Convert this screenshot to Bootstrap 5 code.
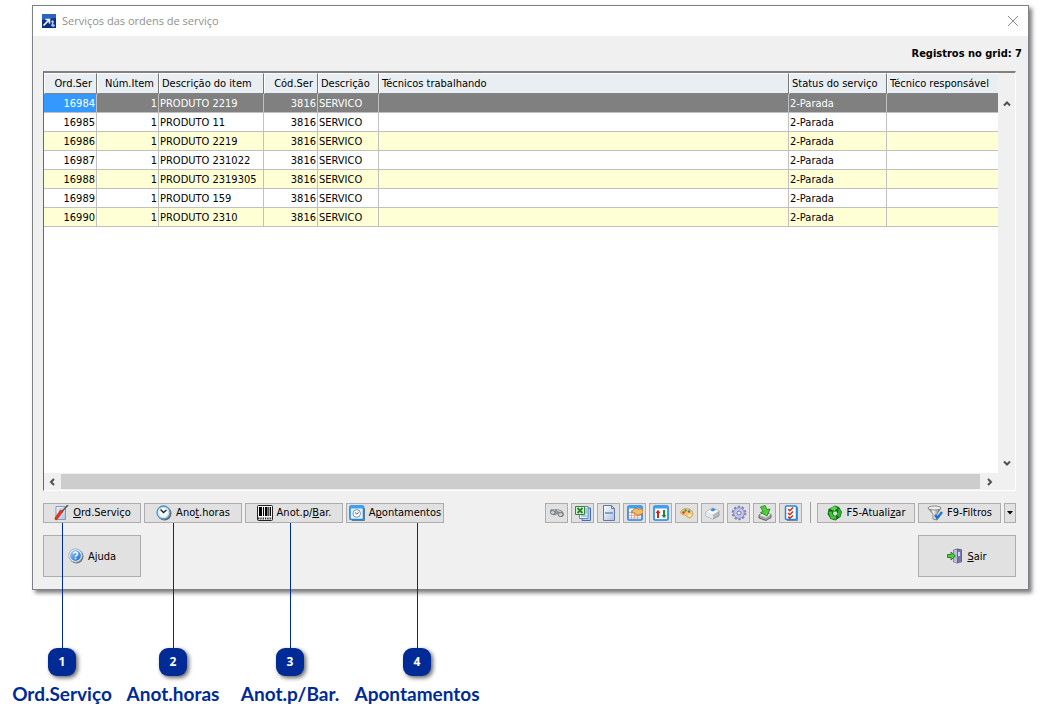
<!DOCTYPE html>
<html lang="pt-BR">
<head>
<meta charset="utf-8">
<meta name="viewport" content="width=device-width, initial-scale=1">
<title>Serviços das ordens de serviço</title>
<link href="https://cdn.jsdelivr.net/npm/bootstrap@5.3.0/dist/css/bootstrap.min.css" rel="stylesheet">
<style>
  :root { --ui: "DejaVu Sans Condensed", "Noto Sans", sans-serif; --navy: #002b96; }
  body { font: 11px/14px var(--ui); color: #000; background: #fff; padding: 5px 23px 133px 32px; }
  .win { min-height: calc(100vh - 138px); background: #f0f0f0; border: 1px solid #7d8186; box-shadow: 3px 3px 4px rgba(0,0,0,.5); }
  .titlebar { height: 30px; padding: 0 9px; background: #fff; font: 11px/16px "Open Sans", sans-serif; color: #8f8f8f; gap: 6px; }
  .titlebar svg { flex: none; }
  .closer { border: 0; background: none; padding: 0; line-height: 0; }
  .content-area { padding: 0 12px 12px 10px; }
  .counter { font-weight: 700; line-height: 16px; padding: 10px 6px 9px; margin: 0; }
  .sheet { background: #fff; border: 1px solid #fff; border-top: 2px solid #808080; border-left: 1px solid #696969; }
  .sheet-pane { min-width: 0; }
  .sheet table { table-layout: fixed; width: 100%; border-collapse: separate; border-spacing: 0; }
  .sheet th { height: 21px; padding: 0 2px; font-weight: 400; background: #e9eef2; border: solid #fff; border-width: 1px 0 1px 1px; border-right: 1px solid #777; border-bottom: 1px solid #808488; white-space: nowrap; }
  .sheet td { height: 19px; padding: 2px 1px 0; border-right: 1px solid #c0c0c0; border-bottom: 1px solid #c0c0c0; white-space: nowrap; }
  .sheet th:last-child, .sheet td:last-child { border-right: 0; }
  .sheet tbody tr:nth-child(odd) td { background: #ffffd5; }
  .sheet tbody tr.current td { background: #808080; color: #fff; }
  .sheet tbody tr.current td:first-child { background: #3399ff; }
  .sheet .num { text-align: right; }
  .sheet th.num { padding-right: 4px; }
  .w-ord { width: 53px; } .w-num { width: 62px; } .w-item { width: 105px; } .w-cod { width: 54px; }
  .w-desc { width: 61px; } .w-status { width: 98px; } .w-resp { width: 111px; }
  .vbar { flex: none; width: 17px; background: #f0f0f0; padding: 27px 0 6px; }
  .hbar { height: 17px; background: #f0f0f0; padding: 0 22px 0 4px; gap: 5px; }
  .hbar span { height: 15px; background: #cdcdcd; }
  .arrow { border: 0; padding: 0; background: none; line-height: 0; width: 8px; }
  .tools { margin-top: 11px; gap: 3px; }
  .tool { height: 20px; width: 98px; padding: 0; gap: 4px; border: 1px solid #adadad; background: #e1e1e1; color: #000; font: inherit; white-space: nowrap; }
  .tool svg { flex: none; }
  .tool span { padding-top: 1px; }
  .tool.sq { width: 23px; } .tool.mid { width: 83px; } .tool.drop { width: 12px; }
  .tool.tall { height: 42px; }
  .split { width: 1px; height: 21px; background: #a0a0a0; margin: 0 3px 0 5px; }
  .bottom { margin-top: 12px; }
  .callout { position: absolute; top: 20px; width: 0; color: var(--navy); z-index: 2; pointer-events: none; }
  .callout i { width: 1px; height: 125px; background: var(--navy); flex: none; }
  .callout b { width: 28px; height: 28px; border-radius: 9px; background: var(--navy); color: #fff; font: 700 12px/28px "Open Sans", sans-serif; text-align: center; box-shadow: 2px 2px 4px rgba(0,0,0,.6); flex: none; }
  .callout span { font: 700 19px/24px Lato, sans-serif; margin-top: 6px; white-space: nowrap; }
  .at-1 { left: 19px; } .at-2 { left: 29px; } .at-3 { left: 45px; } .at-4 { left: 71px; }
</style>
</head>
<body>
<svg width="0" height="0" class="position-absolute" aria-hidden="true">
  <defs>
    <linearGradient id="gb" x1="0" y1="0" x2="1" y2="1"><stop offset="0" stop-color="#9ed0ff"/><stop offset="1" stop-color="#1769c8"/></linearGradient>
    <linearGradient id="gp" x1="0" y1="0" x2="1" y2="1"><stop offset="0" stop-color="#fff"/><stop offset="1" stop-color="#a9bfe4"/></linearGradient>
    <linearGradient id="gm" x1="0" y1="0" x2="1" y2="0"><stop offset="0" stop-color="#555"/><stop offset=".4" stop-color="#f4f4f4"/><stop offset="1" stop-color="#666"/></linearGradient>
  </defs>
</svg>
<main class="win d-flex flex-column">
  <header class="titlebar d-flex align-items-center">
    <svg width="14" height="14" viewBox="0 0 14 14"><rect width="14" height="14" fill="#0c2f86"/><path d="M0 0h14v4L0 6z" fill="#2b63bd"/><path d="M1.500 11.500 6.500 6.500M3.500 5.500h4v4" stroke="#fff" stroke-width="1.600" fill="none"/><path d="M9 12l1-3-1-2 2-1 1 2-1 2 2 1-1 2z" fill="#a8c8f4"/></svg>
    <span>Serviços das ordens de serviço</span>
    <button class="closer ms-auto" type="button" aria-label="Fechar"><svg width="12" height="12" viewBox="0 0 12 12"><path d="M1 1l10 10M11 1L1 11" stroke="#8c8c8c"/></svg></button>
  </header>
  <p class="counter text-end">Registros no grid: 7</p>
  <div class="content-area d-flex flex-column flex-grow-1">
    <section class="sheet d-flex flex-column flex-grow-1">
      <div class="d-flex flex-grow-1">
        <div class="sheet-pane flex-grow-1">
          <table>
            <colgroup><col class="w-ord"><col class="w-num"><col class="w-item"><col class="w-cod"><col class="w-desc"><col><col class="w-status"><col class="w-resp"></colgroup>
            <thead><tr><th class="num">Ord.Ser</th><th class="num">Núm.Item</th><th>Descrição do item</th><th class="num">Cód.Ser</th><th>Descrição</th><th>Técnicos trabalhando</th><th>Status do serviço</th><th>Técnico responsável</th></tr></thead>
            <tbody>
              <tr class="current"><td class="num">16984</td><td class="num">1</td><td>PRODUTO 2219</td><td class="num">3816</td><td>SERVICO</td><td></td><td>2-Parada</td><td></td></tr>
              <tr><td class="num">16985</td><td class="num">1</td><td>PRODUTO 11</td><td class="num">3816</td><td>SERVICO</td><td></td><td>2-Parada</td><td></td></tr>
              <tr><td class="num">16986</td><td class="num">1</td><td>PRODUTO 2219</td><td class="num">3816</td><td>SERVICO</td><td></td><td>2-Parada</td><td></td></tr>
              <tr><td class="num">16987</td><td class="num">1</td><td>PRODUTO 231022</td><td class="num">3816</td><td>SERVICO</td><td></td><td>2-Parada</td><td></td></tr>
              <tr><td class="num">16988</td><td class="num">1</td><td>PRODUTO 2319305</td><td class="num">3816</td><td>SERVICO</td><td></td><td>2-Parada</td><td></td></tr>
              <tr><td class="num">16989</td><td class="num">1</td><td>PRODUTO 159</td><td class="num">3816</td><td>SERVICO</td><td></td><td>2-Parada</td><td></td></tr>
              <tr><td class="num">16990</td><td class="num">1</td><td>PRODUTO 2310</td><td class="num">3816</td><td>SERVICO</td><td></td><td>2-Parada</td><td></td></tr>
            </tbody>
          </table>
        </div>
        <div class="vbar d-flex flex-column align-items-center justify-content-between">
          <button class="arrow" type="button" aria-label="Subir"><svg width="8" height="7" viewBox="0 0 8 7"><path d="M1 5.500 4 2.500l3 3" stroke="#505050" stroke-width="2" fill="none"/></svg></button>
          <button class="arrow" type="button" aria-label="Descer"><svg width="8" height="7" viewBox="0 0 8 7"><path d="M1 1.500 4 4.500l3-3" stroke="#505050" stroke-width="2" fill="none"/></svg></button>
        </div>
      </div>
      <div class="hbar d-flex align-items-center">
        <button class="arrow" type="button" aria-label="Esquerda"><svg width="7" height="8" viewBox="0 0 7 8"><path d="M5 1 2 4l3 3" stroke="#505050" stroke-width="2" fill="none"/></svg></button>
        <span class="flex-grow-1"></span>
        <button class="arrow" type="button" aria-label="Direita"><svg width="7" height="8" viewBox="0 0 7 8"><path d="M2 1l3 3-3 3" stroke="#505050" stroke-width="2" fill="none"/></svg></button>
      </div>
    </section>

    <div class="tools d-flex align-items-center">
      <div class="position-relative">
        <button class="tool d-flex align-items-center justify-content-center" type="button">
          <svg width="16" height="16" viewBox="0 0 16 16"><path d="M3 1.500h9.500v13H3z" fill="url(#gp)" stroke="#8799bb"/><path d="M5 4h5M5 6h4" stroke="#b6c4de"/><path d="M15 0 8.500 7" stroke="#555" stroke-width="1.500"/><path d="M10 6.500 4 14.500c-1 1-2.500 0-2-1.500L7.500 5z" fill="#e8361b" stroke="#b51c0a" stroke-width=".6"/></svg>
          <span><u>O</u>rd.Serviço</span></button>
        <div class="callout at-1 d-flex flex-column align-items-center"><i></i><b>1</b><span>Ord.Serviço</span></div>
      </div>
      <div class="position-relative">
        <button class="tool d-flex align-items-center justify-content-center" type="button">
          <svg width="16" height="16" viewBox="0 0 16 16"><circle cx="8.500" cy="8.500" r="7" fill="#666"/><circle cx="7.500" cy="7.500" r="6.500" fill="#bfe6fa" stroke="#5e93bd" stroke-width="1.300"/><circle cx="7.500" cy="7.500" r="4.500" fill="#f4fcff"/><path d="M4.500 4.500l3 3 3-2.500" stroke="#222" stroke-width="1.300" fill="none"/></svg>
          <span>Ano<u>t</u>.horas</span></button>
        <div class="callout at-2 d-flex flex-column align-items-center"><i></i><b>2</b><span>Anot.horas</span></div>
      </div>
      <div class="position-relative">
        <button class="tool d-flex align-items-center justify-content-center" type="button">
          <svg width="16" height="16" viewBox="0 0 16 16"><rect x=".5" y=".5" width="15" height="15" rx="1" fill="#f4f4f4" stroke="#222"/><path d="M2 2h3v9H2zM6 2h1v9H6zM8 2h2.500v9H8zM11.300 2h.7v9h-.7zM12.700 2H14v9h-1.300z" fill="#000"/><path d="M1 13.500h14" stroke="#333" stroke-width="2" stroke-dasharray="1.400 .9"/></svg>
          <span>Anot.p/<u>B</u>ar.</span></button>
        <div class="callout at-3 d-flex flex-column align-items-center"><i></i><b>3</b><span>Anot.p/Bar.</span></div>
      </div>
      <div class="position-relative">
        <button class="tool d-flex align-items-center justify-content-center" type="button">
          <svg width="16" height="16" viewBox="0 0 16 16"><path d="M3 15.500h12.500V3" stroke="#777" fill="none"/><rect x="1" y="1" width="13.500" height="13.500" rx="1" fill="#eaf6ff" stroke="#1c86e8" stroke-width="1.600"/><path d="M1 1h13.500v2.500H1z" fill="#3ea0f5"/><circle cx="7.700" cy="8.500" r="3.800" fill="#fff" stroke="#6e8fa8"/><path d="M6 7.500l1.700 1.500 2-1.500" stroke="#456" fill="none"/></svg>
          <span>A<u>p</u>ontamentos</span></button>
        <div class="callout at-4 d-flex flex-column align-items-center"><i></i><b>4</b><span>Apontamentos</span></div>
      </div>

      <div class="tools d-flex align-items-center ms-auto mt-0">
        <button class="tool sq d-flex align-items-center justify-content-center" type="button" aria-label="Localizar"><svg width="16" height="16" viewBox="0 0 16 16"><path d="M1 6c0-2 3-2.500 4-1.500L7 4c2 0 3 0 4 1 2 0 4 2.500 4 4.500s-2 3-4 2L8 9c-1 1-2 2-4 1S1 8 1 6z" fill="#8f959a"/><path d="M3 5l3 1M8 5l4 2" stroke="#d5d9dc"/><ellipse cx="3.800" cy="7.500" rx="2.300" ry="2" fill="#c3d3da" stroke="#666" stroke-width=".8"/><ellipse cx="11.500" cy="9.500" rx="2.500" ry="2" fill="#c3d3da" stroke="#666" stroke-width=".8"/></svg></button>
        <button class="tool sq d-flex align-items-center justify-content-center" type="button" aria-label="Excel"><svg width="16" height="16" viewBox="0 0 16 16"><path d="M8 3h7.500v12.500H7z" fill="#b9d2f3" stroke="#3f6bb2"/><path d="M4.500 1.500h8.500v12H4.500z" fill="#f7fbff" stroke="#5d82b8"/><path d="M10 4h2M10 6h2M10 8h2M6 11h6" stroke="#5d90cf"/><path d="M.5 1.500h9v8h-9z" fill="#d4efcc" stroke="#31873a"/><path d="M2.500 3l5 5M7.500 3l-5 5" stroke="#238332" stroke-width="1.800"/></svg></button>
        <button class="tool sq d-flex align-items-center justify-content-center" type="button" aria-label="Documento"><svg width="16" height="16" viewBox="0 0 16 16"><path d="M2.500.5h8l3 3v12h-11z" fill="url(#gp)" stroke="#6078a5"/><path d="M10.500.5v3h3z" fill="#fff" stroke="#6078a5"/><path d="M4 7h8v2H4z" fill="#8a9fc4"/></svg></button>
        <button class="tool sq d-flex align-items-center justify-content-center" type="button" aria-label="Calendário"><svg width="16" height="16" viewBox="0 0 16 16"><rect x="1" y="1" width="14" height="14" rx="1" fill="#fff" stroke="#1c86e8" stroke-width="1.600"/><path d="M1 1h14v2.500H1z" fill="#3ea0f5"/><path d="M2 7.500h12M2 10.500h12M2 13h12M4.500 5v9M7.500 5v9M10.500 5v9" stroke="#f2a392"/><path d="M5 6c2-3 4-3 6-2h5v4.500l-4 1.500c-2 0-4 0-4-2H5z" fill="#f0bd68" stroke="#a86a20" stroke-width=".8"/></svg></button>
        <button class="tool sq d-flex align-items-center justify-content-center" type="button" aria-label="Ordenar"><svg width="16" height="16" viewBox="0 0 16 16"><rect x="1" y="1" width="14" height="14" rx="1" fill="#fff" stroke="#1c86e8" stroke-width="1.600"/><path d="M1 1h14v2.500H1z" fill="#3ea0f5"/><path d="M2.500 8 5 4.800 7.500 8H6v5H4V8z" fill="#e01818"/><path d="M8.500 10 11 13.300 13.500 10H12V5h-2v5z" fill="#158a36"/></svg></button>
        <button class="tool sq d-flex align-items-center justify-content-center" type="button" aria-label="Cores"><svg width="16" height="16" viewBox="0 0 16 16"><path d="M2 6c2-3 8-3 10-1 3 2 2 7-1 8-3 0-3-2-5-3-3 0-5-1-4-4z" fill="#f3cb72" stroke="#cf9c4c" stroke-width=".8"/><circle cx="4.500" cy="7.500" r="1.300" fill="#d23b2c"/><circle cx="6.500" cy="5.500" r="1.200" fill="#3aa544"/><circle cx="10" cy="6.500" r="1.300" fill="#3b77d1"/><circle cx="10.500" cy="10.500" r="1.200" fill="#fff4c2"/></svg></button>
        <button class="tool sq d-flex align-items-center justify-content-center" type="button" aria-label="Imprimir"><svg width="16" height="16" viewBox="0 0 16 16"><path d="M1 7l6-4 7 3v5l-6 3-7-3z" fill="#b4b9be" stroke="#8d9299" stroke-width=".8"/><path d="M1 7l6-4 7 3-6 3.500z" fill="#f5f7f9"/><path d="M8 9.500V14l-7-3V7z" fill="#e6e9ec"/><path d="M5 5l3-2 3 1.500-3 2z" fill="#3c8ad9"/></svg></button>
        <button class="tool sq d-flex align-items-center justify-content-center" type="button" aria-label="Configurar"><svg width="16" height="16" viewBox="0 0 16 16"><circle cx="8" cy="8" r="6" fill="none" stroke="#7d80b8" stroke-width="2.600" stroke-dasharray="2.200 1.570"/><circle cx="8" cy="8" r="5.300" fill="#c5c8ec" stroke="#8f92c6"/><circle cx="8" cy="8" r="2" fill="#efeff8" stroke="#7275ad"/></svg></button>
        <button class="tool sq d-flex align-items-center justify-content-center" type="button" aria-label="Salvar"><svg width="16" height="16" viewBox="0 0 16 16"><path d="M2 10l5-2.500 7 2v3l-5 3-7-2.500z" fill="#a4a8ab" stroke="#444" stroke-width=".8"/><path d="M2 10l7 2.500 5-3L7.500 8z" fill="#e6e8ea"/><path d="M3.500 2 8 .5 10 4.500 13 4l-3 7-6.500-3.500 2.500-1z" fill="#4fd03b" stroke="#1f7d1c" stroke-width=".8"/></svg></button>
        <button class="tool sq d-flex align-items-center justify-content-center" type="button" aria-label="Seleção"><svg width="16" height="16" viewBox="0 0 16 16"><path d="M4 15.500h10.500V2" stroke="#888" fill="none"/><rect x="2.500" y="1" width="11" height="13.500" rx="1" fill="#fff" stroke="#2586da" stroke-width="1.500"/><path d="M5 4l1.800 1.700L10 2.500M5 8l1.800 1.700L10 6.500M5 11.800l1.800 1.500L10 10.500" stroke="#d92218" stroke-width="1.400" fill="none"/></svg></button>
        <div class="split"></div>
        <button class="tool d-flex align-items-center justify-content-center" type="button">
          <svg width="16" height="16" viewBox="0 0 16 16"><path d="M8 .5l4 1.500 3 5-1.500 5-5 3.500-5-1.500L.5 9l1-5z" fill="#176f1b"/><path d="M3 3.500 7.500 1l3 2-3 3L5 5z" fill="#58d34a"/><path d="M11.500 3l3 4-1.500 5-3-1 1-4z" fill="#2fae33"/><path d="M1.500 7l3-.5 1.500 4 3 1v3L4 13.500z" fill="#41c33b"/><path d="M6.500 6.500l3 0 1 2.500-2.500 2-2-2z" fill="#cfe6cc"/></svg>
          <span>F5-Atuali<u>z</u>ar</span></button>
        <button class="tool mid d-flex align-items-center justify-content-center" type="button">
          <svg width="16" height="16" viewBox="0 0 16 16"><path d="M1 3l5 6v5l4 1V9l4-6z" fill="url(#gm)" stroke="#666" stroke-width=".7"/><ellipse cx="7.500" cy="3" rx="6.500" ry="2" fill="#ececec" stroke="#777" stroke-width=".8"/><path d="M8 10l2.500 3L15 7" stroke="#1970d2" stroke-width="2.300" fill="none"/></svg>
          <span>F9-Filtros</span></button>
        <button class="tool drop d-flex align-items-center justify-content-center" type="button" aria-label="Mais filtros"><svg width="6" height="4" viewBox="0 0 6 4"><path d="M0 0h6L3 3.500z"/></svg></button>
      </div>
    </div>

    <div class="bottom d-flex justify-content-between">
      <button class="tool tall d-flex align-items-center justify-content-center" type="button">
        <svg width="16" height="16" viewBox="0 0 16 16"><circle cx="8.500" cy="8.500" r="7" fill="#777"/><circle cx="7.500" cy="7.500" r="6.700" fill="#f4f8fc" stroke="#8b9db2" stroke-width=".8"/><circle cx="7.500" cy="7.500" r="5.400" fill="url(#gb)"/><path d="M5.500 6c0-2.700 4.200-2.400 4 0 0 1.300-2 1.300-2 2.700M7.500 9.800v1.400" stroke="#fff" stroke-width="1.500" fill="none"/></svg>
        <span>A<u>j</u>uda</span></button>
      <button class="tool tall d-flex align-items-center justify-content-center" type="button">
        <svg width="16" height="16" viewBox="0 0 16 16"><path d="M6 2l4-1.500 5 1V14l-5 1.500L6 14z" fill="#55567f"/><path d="M6.500 2.300 10 1.200V15l-3.500-1z" fill="#b9bbe0"/><path d="M10.500 1.500l4 .7v11.500l-4 1z" fill="#7778a6"/><path d="M11 4h2v4h-2z" fill="#d5d6ee"/><path d="M.5 6.500h3.500V4L8.500 8 4 12V9.500H.5z" fill="#55c93c" stroke="#207a1c" stroke-width=".9"/></svg>
        <span><u>S</u>air</span></button>
    </div>
  </div>
</main>
<script src="https://cdn.jsdelivr.net/npm/bootstrap@5.3.0/dist/js/bootstrap.bundle.min.js"></script>
</body>
</html>
